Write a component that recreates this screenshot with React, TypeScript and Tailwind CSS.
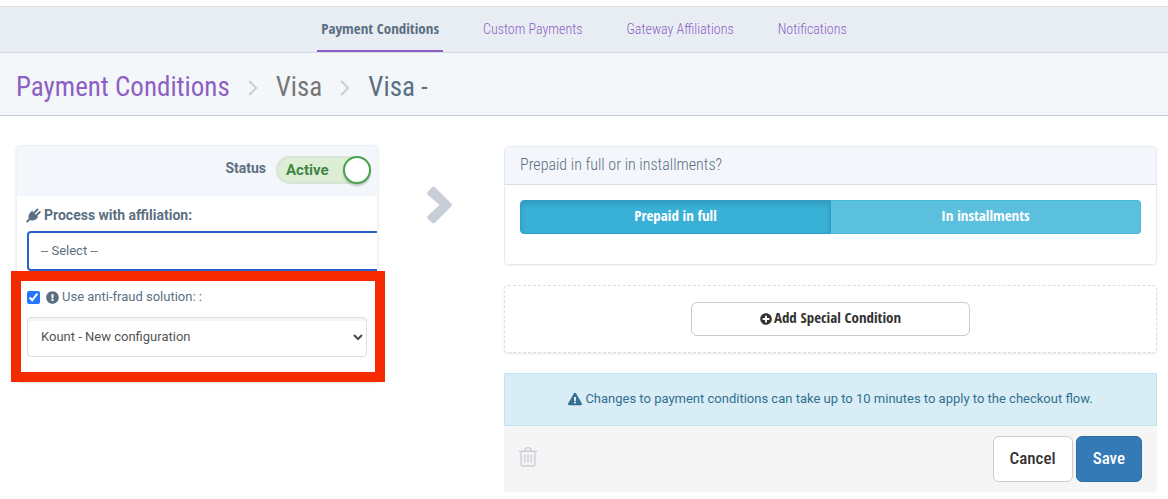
import React, { useState } from 'react'
import { FaExclamationCircle, FaExclamationTriangle, FaPlusCircle } from 'react-icons/fa'

const tabs = ['Payment Conditions', 'Custom Payments', 'Gateway Affiliations', 'Notifications']

function Crumb() {
  return (
    <svg viewBox="0 0 10 16" className="mt-[2px] h-4 w-[10px]" fill="none" stroke="#c8ced9" strokeWidth="2">
      <path d="M1.2 1l7 7-7 7" />
    </svg>
  )
}

function PlugIcon() {
  return (
    <svg viewBox="0 0 15 15" className="-ml-px size-[15px]" fill="none" stroke="currentColor" strokeLinecap="round">
      <path d="M1.200 13.600L4 10.800" strokeWidth="2" />
      <path d="M8.500 4.500l3-3M10.800 7l3-3" strokeWidth="1.800" />
      <path
        d="M6 3.200L11.800 9C10.200 11.600 7 12.800 4.600 12L3 10.400C2.200 8 3.400 4.800 6 3.200z"
        fill="currentColor"
        strokeWidth="0.600"
      />
    </svg>
  )
}

function TrashIcon() {
  return (
    <svg viewBox="0 0 18 20" className="h-5 w-[18px]" fill="none" stroke="currentColor" strokeWidth="1.400">
      <path d="M0 4.200h18M5.700 4L6.600 1.600Q6.800.9 7.600.9h2.800q.8 0 1 .7L12.300 4M2.200 4.200v12.600q0 2.200 1.800 2.200h10q1.800 0 1.800-2.200V4.200" />
      <path d="M5.800 7.500v8M9 7.500v8M12.200 7.500v8" />
    </svg>
  )
}

function Tabs() {
  return (
    <nav className="mt-[6px] flex h-[47px] justify-center gap-9 border-y border-t-[#dcdfdf] border-b-[#d5dce4] bg-[#e8edf4]">
      {tabs.map((tab, i) => (
        <a
          key={tab}
          href="#"
          className={
            i === 0
              ? "border-b-2 border-[#8e5fc4] px-1 pt-[11px] font-['Open_Sans_Condensed',sans-serif] text-[15px] leading-5 font-bold text-[#5b6f82]"
              : 'px-1 pt-3 text-sm leading-5 font-light text-[#8e5fc4]'
          }
        >
          {tab}
        </a>
      ))}
    </nav>
  )
}

function StatusPanel() {
  const [antiFraud, setAntiFraud] = useState(true)

  return (
    <div className="relative font-['Roboto',sans-serif] text-[13px] font-normal text-[#5b6f82]">
      <div className="overflow-hidden rounded-[3px] border border-[#eff1f4] pb-6 shadow-sm">
        <div className="flex h-[50px] items-center justify-end gap-[10px] bg-[#f3f6fa] pr-[6px] pb-[2px]">
          <span className="pb-1 text-sm font-bold">Status</span>
          <button
            role="switch"
            aria-checked="true"
            className="flex h-7 w-[95px] items-center justify-between rounded-full border-2 border-[#d8e4d6] bg-[#dcefd5] pl-2 text-[15px] font-bold text-[#3f8445]"
          >
            Active
            <span className="-mr-[2px] size-7 shrink-0 rounded-full border-2 border-[#48a44c] bg-white shadow-[0_2px_2px_#0003]"></span>
          </button>
        </div>
        <div className="pt-[9px] pl-[10px]">
          <label htmlFor="affiliation" className="flex items-center gap-[3px] text-sm leading-5 font-bold">
            <PlugIcon />
            Process with affiliation:
          </label>
          <select
            id="affiliation"
            className="mt-[6px] block h-10 w-[105%] appearance-none rounded border-2 border-[#2a62c9] bg-white px-3"
          >
            <option>-- Select --</option>
          </select>
          <div className="mt-4 flex items-center leading-5">
            <input
              id="antifraud"
              type="checkbox"
              checked={antiFraud}
              onChange={(e) => setAntiFraud(e.target.checked)}
              className="size-[13px] accent-[#2475ff]"
            />
            <label htmlFor="antifraud" className="ml-[6px] flex items-center gap-[3px]">
              <FaExclamationCircle className="size-[13px]" />
              Use anti-fraud solution: :
            </label>
          </div>
          <div className="relative mt-[10px] mr-[10px]">
            <select
              aria-label="Anti-fraud solution"
              className="block h-10 w-full appearance-none rounded border border-[#d9dfe5] bg-white px-[13px] text-[#555] shadow-[inset_0_3px_0_#f5f5f5]"
            >
              <option>Kount - New configuration</option>
            </select>
            <svg
              viewBox="0 0 10 7"
              className="pointer-events-none absolute top-[17px] right-1 h-[7px] w-[10px]"
              fill="none"
              stroke="#4a4a4a"
              strokeWidth="2"
            >
              <path d="M1 1l4 4 4-4" />
            </svg>
          </div>
        </div>
      </div>
      <div className="pointer-events-none absolute top-[126px] -right-[7px] bottom-0 -left-[5px] border-10 border-[#f62a00]"></div>
    </div>
  )
}

function Installments() {
  return (
    <section className="rounded border border-[#e6ebf1] shadow-[0_1px_1px_#0000000d]">
      <h2 className="h-[38px] border-b border-[#d7dfe6] bg-[#f3f6fa] px-[15px] text-base leading-9 font-light text-[#5b6f82]">
        Prepaid in full or in installments?
      </h2>
      <div className="flex px-[15px] pt-[15px] pb-[30px] font-['Open_Sans_Condensed',sans-serif] text-[15px] font-bold text-white">
        <button className="h-[34px] flex-1 rounded-l border border-[#2d9fc5] bg-[#39b0d6] pb-[3px] shadow-[inset_0_3px_5px_#00000020]">
          Prepaid in full
        </button>
        <button className="h-[34px] flex-1 rounded-r border border-l-0 border-[#46b8da] bg-[#5bc0de] pb-[3px]">
          In installments
        </button>
      </div>
    </section>
  )
}

function App() {
  return (
    <div className="overflow-hidden bg-white pb-2 font-['Roboto_Condensed',sans-serif]">
      <Tabs />
      <header className="flex h-[63px] items-center gap-[18px] border-b border-[#c5cbda] bg-[#f3f7fa] px-4 pt-[6px] text-[27px] text-[#5b6f82]">
        <a href="#" className="text-[#8e5fc4]">Payment Conditions</a>
        <Crumb />
        <a href="#" className="text-[#777]">Visa</a>
        <Crumb />
        <span>Visa -</span>
      </header>
      <main className="grid grid-cols-[362fr_126fr_653fr] items-start pt-[29px] pr-[11px] pl-4">
        <StatusPanel />
        <svg viewBox="0 0 26 38" className="mt-[41px] ml-[49px] h-[38px] w-[26px]" fill="#c8ced7">
          <path d="M.6 6L5 1.2Q6.500-.3 8 1.200L24.300 17.600Q25.500 19 24.300 20.400L8 36.800Q6.500 38.200 5 36.800L.6 32.400Q-.3 31.200.6 30L12.500 19 .6 8.400Q-.3 7.200.6 6z" />
        </svg>
        <div className="pt-px">
          <Installments />
          <section className="mt-5 flex justify-center rounded border border-dashed border-[#d6e0e9] py-4 shadow-[0_1px_2px_#0000001a]">
            <button className="flex h-[34px] w-[43%] items-center justify-center gap-[2px] rounded-md border border-[#ccc] bg-white pb-[3px] font-['Open_Sans_Condensed',sans-serif] text-[15px] font-bold text-[#333]">
              <FaPlusCircle className="mt-[2px] size-3" />
              Add Special Condition
            </button>
          </section>
          <p className="mt-5 flex h-[53px] items-center justify-center gap-[3px] border border-[#bce8f1] bg-[#d9edf7] pb-[2px] font-['Roboto',sans-serif] text-[13px] text-[#31708f]">
            <FaExclamationTriangle className="size-[14px]" />
            Changes to payment conditions can take up to 10 minutes to apply to the checkout flow.
          </p>
          <footer className="flex h-[66px] items-center justify-end gap-[3px] rounded-b bg-[#f5f5f5] px-[15px] text-[17px] font-medium">
            <button aria-label="Delete" className="mr-auto pb-1 text-[#c8ced7]">
              <TrashIcon />
            </button>
            <button className="h-[46px] rounded-md border border-[#ccc] bg-white px-4 text-[#333]">Cancel</button>
            <button className="h-[46px] rounded-md border border-[#2e6da4] bg-[#337ab7] px-4 text-white">Save</button>
          </footer>
        </div>
      </main>
    </div>
  )
}

export default App
